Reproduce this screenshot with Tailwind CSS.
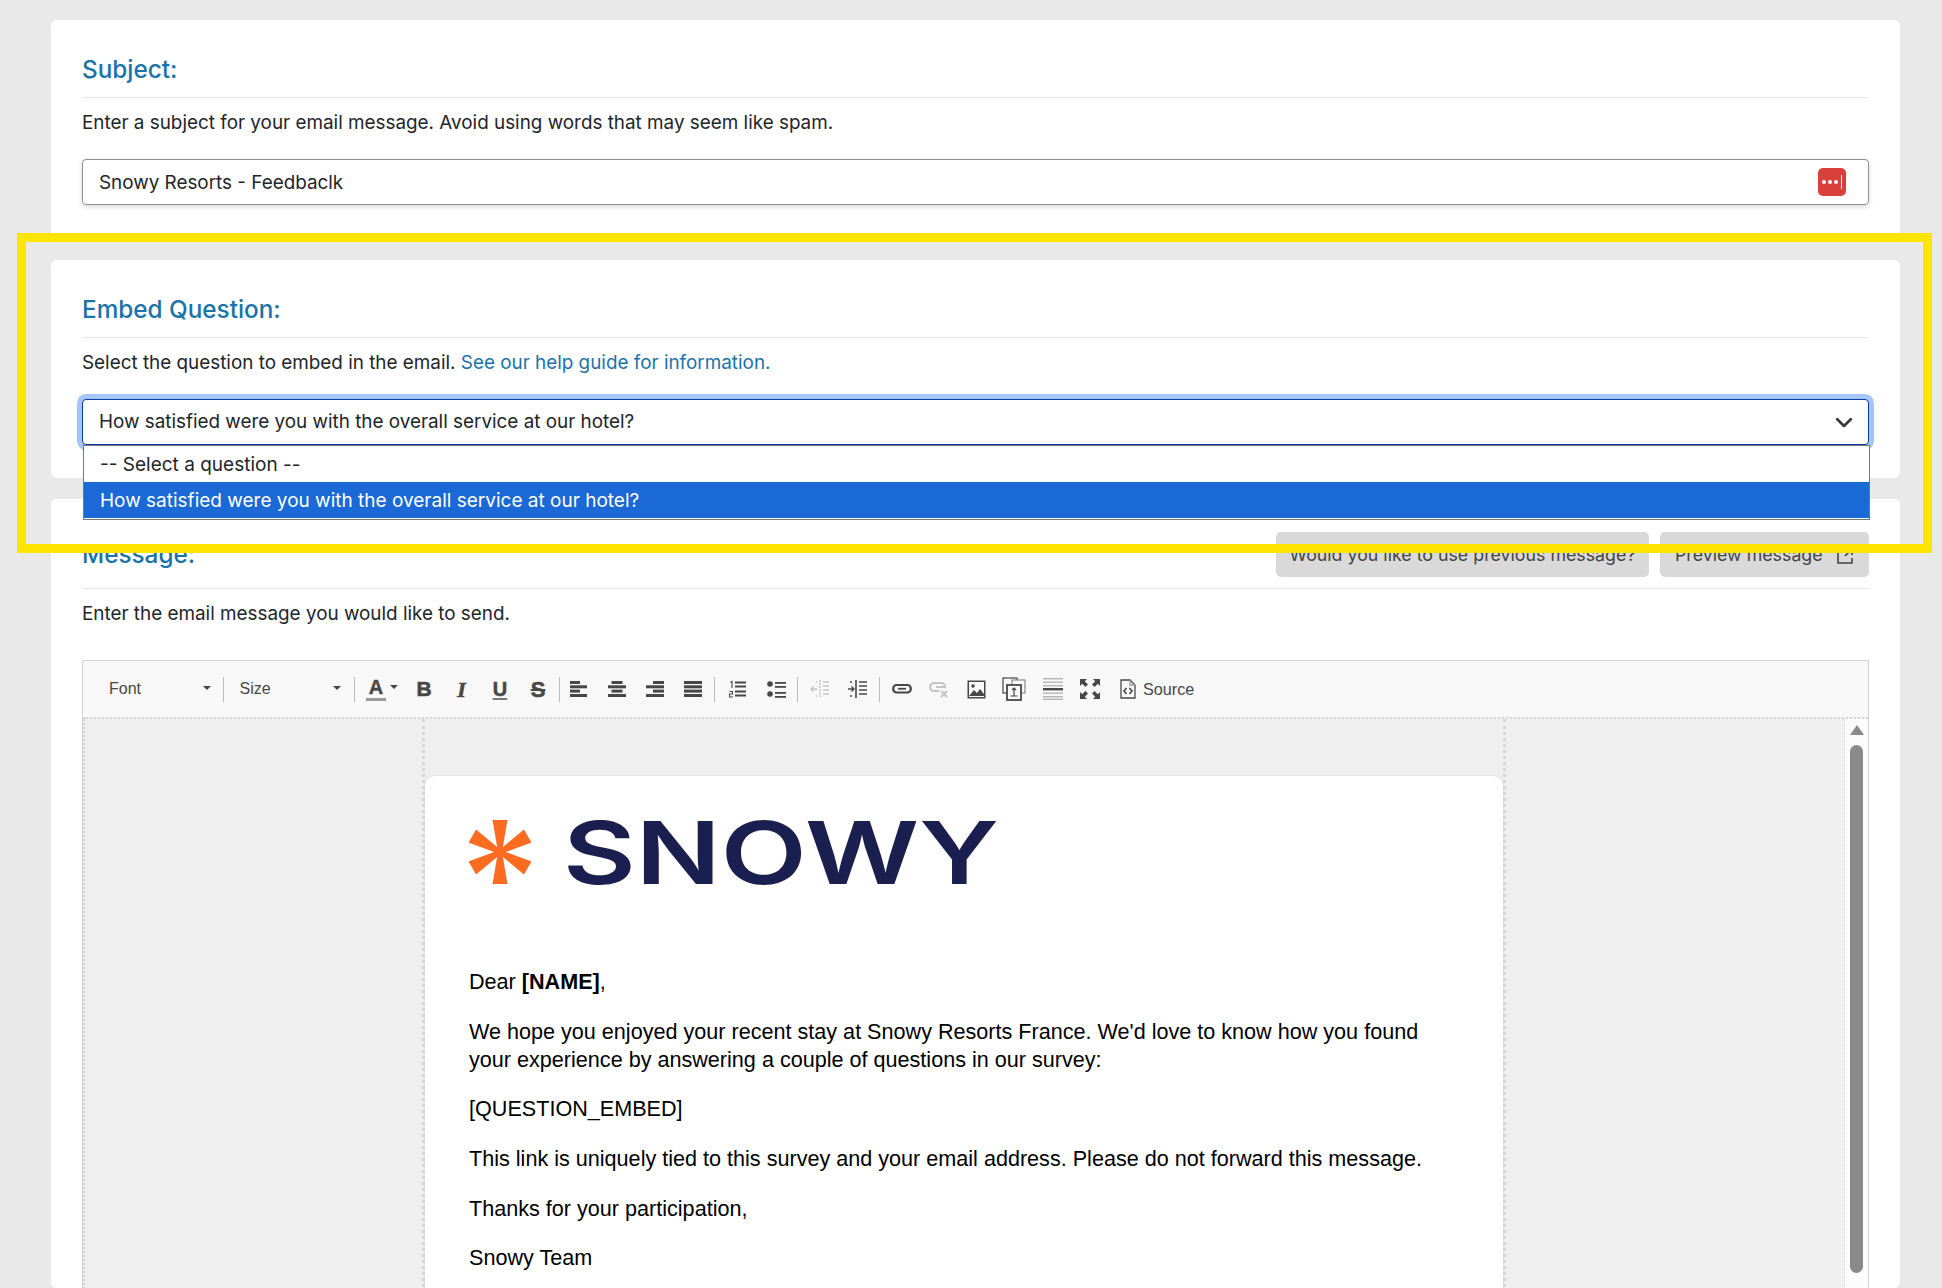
<!DOCTYPE html>
<html><head><meta charset="utf-8">
<script src="https://cdn.jsdelivr.net/npm/@tailwindcss/browser@4"></script>
</head>
<body class="m-0">
<div class="relative w-[1942px] h-[1288px] overflow-hidden bg-[#e9e9e9] pl-[51px] pr-[42px] pt-[20px] font-['Inter',sans-serif] text-[#212529]">

  <section class="bg-white rounded-[6px] px-[31px] pt-[33px] h-[219px] mb-[21px]">
    <h2 class="h-[34px] leading-[32px] text-[24.3px] font-medium text-[#1a73a8]">Subject:</h2>
    <div class="mt-[10px] h-px bg-[#e5e5e5]"></div>
    <p class="mt-[13px] h-[24px] leading-[24px] text-[18.87px]">Enter a subject for your email message. Avoid using words that may seem like spam.</p>
    <div class="mt-[24px] h-[46px] border border-[#8f8f8f] rounded-[4px] shadow-[0_2px_5px_rgba(0,0,0,0.15)] flex items-center justify-between pl-[16px] pr-[22px] text-[18.87px]">
      <span class="pt-[2px]">Snowy Resorts - Feedbaclk</span>
      <span class="w-[28px] h-[28px] rounded-[5px] bg-[#d9403a] flex items-center justify-center">
        <svg width="24" height="14" viewBox="0 0 24 14"><g fill="#fff"><circle cx="4" cy="7" r="2"/><circle cx="10" cy="7" r="2"/><circle cx="16" cy="7" r="2"/><rect x="21" y="0" width="1" height="14"/></g></svg>
      </span>
    </div>
  </section>

  <section class="bg-white rounded-[6px] px-[31px] pt-[33px] h-[218px] mb-[21px]">
    <h2 class="h-[34px] leading-[32px] text-[24.3px] font-medium text-[#1a73a8]">Embed Question:</h2>
    <div class="mt-[10px] h-px bg-[#e5e5e5]"></div>
    <p class="mt-[13px] h-[24px] leading-[24px] text-[18.87px]">Select the question to embed in the email. <a class="text-[#1a73a8]">See our help guide for information.</a></p>
    <div class="relative mt-[24px] h-[46px] w-[1787px] border border-[#0b3d9e] rounded-[4px] ring-[5px] ring-[#a6c5f7] flex items-center justify-between pl-[16px] pr-[15px] text-[18.87px] bg-white">
      <span>How satisfied were you with the overall service at our hotel?</span>
      <svg width="18" height="18" viewBox="0 0 16 16" fill="none" stroke="#343a40" stroke-width="2.4" stroke-linecap="round" stroke-linejoin="round"><path d="M2 5.500l6 6 6-6"/></svg>
    </div>
  </section>

  <section class="bg-white rounded-[6px] px-[31px] pt-[33px] h-[789px]">
    <div class="flex items-center justify-between h-[45px]">
      <h2 class="text-[24.3px] font-medium text-[#1a73a8] leading-[34px] pb-[2px]">Message:</h2>
      <div class="flex gap-[11px]">
        <button class="h-[45px] w-[373px] rounded-[5px] bg-[#d9d9d9] text-[#444] text-[17.8px] text-center pt-[2px]">Would you like to use previous message?</button>
        <button class="h-[45px] w-[209px] rounded-[5px] bg-[#d9d9d9] text-[#444] text-[17.8px] flex items-center pl-[15px] pt-[2px] gap-[13px]">Preview message
          <svg width="18" height="18" viewBox="0 0 18 18" fill="none" stroke="#444" stroke-width="1.6"><path d="M7 3H2v13h14v-5M10 2h6v6M16 2l-7 7"/></svg>
        </button>
      </div>
    </div>
    <div class="mt-[11px] h-px bg-[#e5e5e5]"></div>
    <p class="mt-[13px] h-[24px] leading-[24px] text-[18.87px]">Enter the email message you would like to send.</p>

    <div class="mt-[34px] w-[1787px] border border-[#d1d1d1] font-['Liberation_Sans',Arial,sans-serif]">
      <div class="h-[56px] bg-[#f8f8f8] flex items-center text-[#474747]">
        <div class="ml-[26px] w-[114px] flex items-center text-[16px] relative">Font<span class="absolute left-[94px] top-[9px] border-x-[4px] border-t-[4px] border-x-transparent border-t-[#474747]"></span></div>
        <span class="w-px h-[25px] bg-[#bcbcbc]"></span>
        <div class="pl-[15.500px] w-[130px] flex items-center text-[16px] relative">Size<span class="absolute left-[109px] top-[9px] border-x-[4px] border-t-[4px] border-x-transparent border-t-[#474747]"></span></div>
        <span class="w-px h-[25px] bg-[#bcbcbc]"></span>
        <div class="w-[50px] h-[30px] relative">
          <span class="absolute left-[11px] top-[1px] w-[20px] text-center text-[20px] leading-[24px] font-bold [-webkit-text-stroke:0.4px_#474747]">A</span>
          <span class="absolute left-[11px] top-[24px] w-[20px] h-[3px] bg-[#9a9a9a]"></span>
          <span class="absolute left-[35px] top-[11px] border-x-[4px] border-t-[4px] border-x-transparent border-t-[#474747]"></span>
        </div>
        <div class="w-[38px] text-center text-[21px] font-bold [-webkit-text-stroke:0.6px_#474747]">B</div>
        <div class="w-[38px] text-center text-[22px] font-bold italic font-['Liberation_Serif',serif] [-webkit-text-stroke:0.6px_#474747] pr-[1px]">I</div>
        <div class="w-[38px] text-center text-[20px] font-bold underline decoration-[#777] decoration-2 underline-offset-[2px] [-webkit-text-stroke:0.5px_#474747]">U</div>
        <div class="w-[38px] text-center text-[22px] font-bold line-through [-webkit-text-stroke:0.5px_#474747]">S</div>
        <span class="ml-[2px] w-px h-[25px] bg-[#bcbcbc]"></span>
        <div class="w-[38px] flex justify-center"><svg width="18" height="16" fill="#474747"><rect width="10" height="3"/><rect y="4.300" width="17" height="3"/><rect y="8.600" width="10" height="3"/><rect y="13" width="17" height="3"/></svg></div>
        <div class="w-[38px] flex justify-center"><svg width="18" height="16" fill="#474747"><rect x="3.500" width="11" height="3"/><rect y="4.300" width="18" height="3"/><rect x="3.500" y="8.600" width="11" height="3"/><rect y="13" width="18" height="3"/></svg></div>
        <div class="w-[38px] flex justify-center"><svg width="18" height="16" fill="#474747"><rect x="7" width="11" height="3"/><rect y="4.300" width="18" height="3"/><rect x="7" y="8.600" width="11" height="3"/><rect y="13" width="18" height="3"/></svg></div>
        <div class="w-[38px] flex justify-center"><svg width="18" height="16" fill="#474747"><rect width="18" height="3"/><rect y="4.300" width="18" height="3"/><rect y="8.600" width="18" height="3"/><rect y="13" width="18" height="3"/></svg></div>
        <span class="ml-[2px] w-px h-[25px] bg-[#bcbcbc]"></span>
        <div class="ml-[4px] w-[38px] flex justify-center"><svg width="18" height="18" fill="none" stroke="#474747" stroke-width="1.1"><path d="M1.500 2.500l1.500-1v6.500"/><path d="M.5 11.500h3v2.500h-3v3h3.500"/><path stroke-width="1.8" d="M6 2.500h11M6 6.500h11M6 11.500h11M6 15.500h11"/></svg></div>
        <div class="w-[38px] flex justify-center"><svg width="19" height="18" fill="#474747"><circle cx="3" cy="4" r="2.800"/><circle cx="3" cy="14" r="2.800"/><rect x="8" y="2" width="11" height="1.800"/><rect x="8" y="6" width="11" height="1.800"/><rect x="8" y="12" width="11" height="1.800"/><rect x="8" y="16" width="11" height="1.800"/></svg></div>
        <span class="ml-[2px] w-px h-[25px] bg-[#bcbcbc]"></span>
        <div class="ml-[3px] w-[38px] flex justify-center"><svg width="20" height="20" fill="none" stroke="#c4c4c4" stroke-width="1.400"><path d="M10 1v18" stroke-dasharray="2 1"/><path d="M13 3h6M13 7h6M13 11h6M13 15h6"/><path d="M7 10H1M3.500 7.500L1 10l2.500 2.500"/><path d="M6 3h1M6 17h1"/></svg></div>
        <div class="w-[38px] flex justify-center"><svg width="20" height="20" fill="none" stroke="#474747" stroke-width="1.400"><path d="M8 1v18" stroke-width="1.600"/><path d="M11 3h8M11 7h8M11 11h8M11 15h8"/><path d="M0 10h6M3.500 7.500L6 10l-2.500 2.500"/><path d="M2 3h2M2 17h2"/></svg></div>
        <span class="ml-[2px] w-px h-[25px] bg-[#bcbcbc]"></span>
        <div class="ml-[3px] w-[37.500px] flex justify-center"><svg width="20" height="14" fill="none" stroke="#474747" stroke-width="2.200"><rect x="1.200" y="3" width="17.600" height="7.500" rx="3.500"/><path d="M6 6.750h8" stroke-width="1.800"/></svg></div>
        <div class="w-[37.500px] flex justify-center"><svg width="20" height="18" fill="none" stroke="#c4c4c4" stroke-width="2"><path d="M10 11H5a4 4 0 010-8h7a4 4 0 014 3"/><path d="M7 7h7a4 4 0 013 1"/><path d="M12 11l6 6M18 11l-6 6"/></svg></div>
        <div class="w-[37.500px] flex justify-center"><svg width="19" height="19" fill="none"><rect x=".5" y=".5" width="18" height="18" fill="#474747"/><rect x="2" y="2" width="15" height="15" fill="#f8f8f8"/><circle cx="6" cy="6" r="1.800" fill="#474747"/><path d="M2 16l5-6 3 3 3-4 4 5v2H2z" fill="#474747"/></svg></div>
        <div class="w-[37.500px] flex justify-center"><svg width="24" height="24" fill="#f8f8f8" stroke="#474747" stroke-width="1.200"><rect x="1" y="1" width="14" height="15"/><rect x="10" y="3" width="13" height="13" stroke="#8a8a8a"/><rect x="5" y="8" width="14" height="15" stroke-width="1.800"/><path d="M12 11v8M8.500 19h7M10 13l2-2 2 2" fill="none"/></svg></div>
        <div class="ml-[1px] w-[37.500px] flex justify-center"><svg width="20" height="22" fill="#b5b5b5"><rect y="0" width="20" height="1.400"/><rect y="3.500" width="20" height="1.400"/><rect y="7" width="20" height="1.400"/><rect y="10" width="20" height="2.400" fill="#474747"/><rect y="14.500" width="20" height="1.400"/><rect y="18" width="20" height="1.400"/><rect y="20.600" width="20" height="1.400"/></svg></div>
        <div class="w-[37.500px] flex justify-center"><svg width="20" height="20" fill="#474747"><path d="M0 0h7l-2.200 2.200L8 5.400 5.400 8 2.200 4.800 0 7zM20 0v7l-2.200-2.200L14.600 8 12 5.400l3.200-3.200L13 0zM0 20v-7l2.200 2.200L5.400 12 8 14.600l-3.200 3.200L7 20zM20 20h-7l2.200-2.200L12 14.600l2.600-2.600 3.200 3.200L20 13z"/></svg></div>
        <div class="ml-[11px] flex items-center gap-[7px]">
          <svg width="16" height="20" fill="none" stroke="#474747" stroke-width="1.300"><path d="M1 1h9l5 5v13H1z"/><path d="M10 1v5h5" stroke="#9a9a9a"/><path d="M6.500 9L4 12l2.500 3M9.500 9L12 12l-2.500 3" stroke-width="1.600"/></svg>
          <span class="text-[16.2px] text-[#474747]">Source</span>
        </div>
      </div>

      <div class="flex h-[600px] bg-[#efefef] border-t-2 border-dotted border-[#d6d6d6]">
        <div class="w-[339px] border-l-2 border-dotted border-[#d6d6d6]"></div>
        <div class="w-[1084px] border-x-[3px] border-dotted border-[#d6d6d6] pt-[57px]">
          <div class="bg-white rounded-t-[10px] h-[600px] pl-[44px] pt-[41px] text-[21.6px] leading-[28px] text-black shadow-[0_0_2px_#ccc]">
            <svg width="540" height="70" viewBox="0 0 540 70" class="block">
              <g transform="translate(31 35)" fill="#ff6b21">
                <path d="M-7.500 -32H7.500L2.500 -3H-2.500z"/>
                <path transform="rotate(60)" d="M-7.500 -32H7.500L2.500 -3H-2.500z"/>
                <path transform="rotate(120)" d="M-7.500 -32H7.500L2.500 -3H-2.500z"/>
                <path transform="rotate(180)" d="M-7.500 -32H7.500L2.500 -3H-2.500z"/>
                <path transform="rotate(240)" d="M-7.500 -32H7.500L2.500 -3H-2.500z"/>
                <path transform="rotate(300)" d="M-7.500 -32H7.500L2.500 -3H-2.500z"/>
                <circle r="5"/>
              </g>
              <text x="94" y="66.500" font-family="Inter" font-weight="600" font-size="87" fill="#1a1f4f" textLength="436" lengthAdjust="spacingAndGlyphs">SNOWY</text>
            </svg>
            <p class="mt-[80.5px]">Dear <b>[NAME]</b>,</p>
            <p class="mt-[22.4px]">We hope you enjoyed your recent stay at Snowy Resorts France. We'd love to know how you found<br>your experience by answering a couple of questions in our survey:</p>
            <p class="mt-[21.6px]">[QUESTION_EMBED]</p>
            <p class="mt-[21.4px]">This link is uniquely tied to this survey and your email address. Please do not forward this message.</p>
            <p class="mt-[21.8px]">Thanks for your participation,</p>
            <p class="mt-[21px]">Snowy Team</p>
          </div>
        </div>
        <div class="flex-1"></div>
        <div class="w-[24px] bg-[#fcfcfc] border-l border-dotted border-[#d6d6d6] relative">
          <span class="absolute left-[5px] top-[6px] border-x-[7px] border-b-[10px] border-x-transparent border-b-[#8a8a8a]"></span>
          <span class="absolute left-[5px] top-[26px] w-[13px] h-[528px] rounded-full bg-[#8a8a8a]"></span>
        </div>
      </div>
    </div>
  </section>

  <div class="absolute left-[83px] top-[445px] w-[1787px] h-[75px] bg-white border border-[#767676] text-[19px]">
    <div class="h-[36px] leading-[38px] pl-[16px] text-[#212529]">-- Select a question --</div>
    <div class="h-[36px] leading-[38px] pl-[16px] bg-[#1a69d6] text-white">How satisfied were you with the overall service at our hotel?</div>
  </div>

  <div class="absolute left-[17px] top-[233px] w-[1915px] h-[320px] border-[9px] border-[#ffe600] pointer-events-none"></div>
</div>
</body></html>
